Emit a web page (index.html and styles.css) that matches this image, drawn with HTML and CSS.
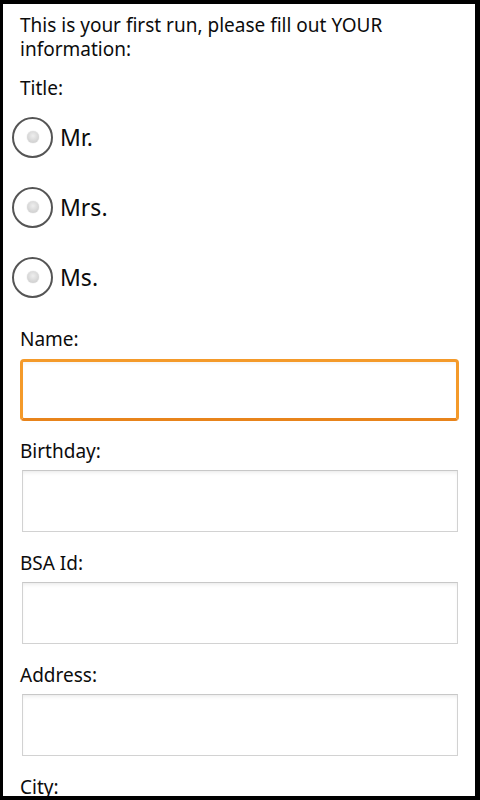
FILE: index.html
```html
<!DOCTYPE html>
<html>
<head>
<meta charset="utf-8">
<link rel="stylesheet" href="styles.css">
</head>
<body>
<div class="screen">
  <p class="intro">This is your first run, please fill out YOUR information:</p>
  <div class="label title-label">Title:</div>
  <div class="radios">
    <label class="radio"><span class="circle"><span class="dot"></span></span><span class="rtext">Mr.</span></label>
    <label class="radio"><span class="circle"><span class="dot"></span></span><span class="rtext">Mrs.</span></label>
    <label class="radio"><span class="circle"><span class="dot"></span></span><span class="rtext">Ms.</span></label>
  </div>
  <div class="field">
    <div class="label">Name:</div>
    <div class="box focused"></div>
  </div>
  <div class="field">
    <div class="label">Birthday:</div>
    <div class="box"></div>
  </div>
  <div class="field">
    <div class="label">BSA Id:</div>
    <div class="box"></div>
  </div>
  <div class="field">
    <div class="label">Address:</div>
    <div class="box"></div>
  </div>
  <div class="field">
    <div class="label">City:</div>
    <div class="box"></div>
  </div>
</div>
</body>
</html>
```
FILE: styles.css
```css
html, body {
  margin: 0;
  padding: 0;
  background: #000;
}
body {
  width: 480px;
  height: 800px;
  overflow: hidden;
}
.screen {
  margin: 4px 5px 0 3px;
  height: 792px;
  background: #fff;
  overflow: hidden;
  padding: 9px 16px 0 17px;
  box-sizing: border-box;
  font-family: "Noto Sans", "DejaVu Sans", sans-serif;
  color: #0c0c0c;
}
.intro {
  margin: 0;
  font-size: 19px;
  line-height: 24px;
}
.label {
  font-size: 19px;
  line-height: 24px;
}
.title-label {
  margin-top: 15px;
}
.radios {
  display: flex;
  flex-direction: column;
  margin-top: 2px;
}
.radio {
  display: flex;
  align-items: center;
  height: 70px;
  margin-left: -8px;
}
.circle {
  width: 37px;
  height: 37px;
  border: 2px solid #555;
  border-radius: 50%;
  display: flex;
  align-items: center;
  justify-content: center;
  background: #fff;
}
.dot {
  width: 12px;
  height: 12px;
  border-radius: 50%;
  background: radial-gradient(circle at 50% 40%, #eee 0%, #d6d6d6 60%, #c8c8c8 100%);
  box-shadow: 0 0 1px #bbb;
}
.rtext {
  font-size: 23px;
  margin-left: 7px;
}
.field {
  display: flex;
  flex-direction: column;
}
.field + .field {
  margin-top: 18px;
}
.field + .field + .field {
  margin-top: 19px;
}
.radios + .field {
  margin-top: 15px;
}
.box {
  margin: 7px 1px 0 2px;
  height: 62px;
  box-sizing: border-box;
  border: 1px solid #d2d2d2;
  border-top-color: #c8c8c8;
  background: #fff;
  box-shadow: inset 0 3px 4px -2px rgba(0, 0, 0, 0.10);
}
.box.focused {
  margin: 8px 0 0 0;
  height: 62px;
  border: 3px solid #f49a2a;
  border-bottom-color: #e8841b;
  border-radius: 4px;
  box-shadow: inset 0 3px 4px -2px rgba(0, 0, 0, 0.06);
}
```
